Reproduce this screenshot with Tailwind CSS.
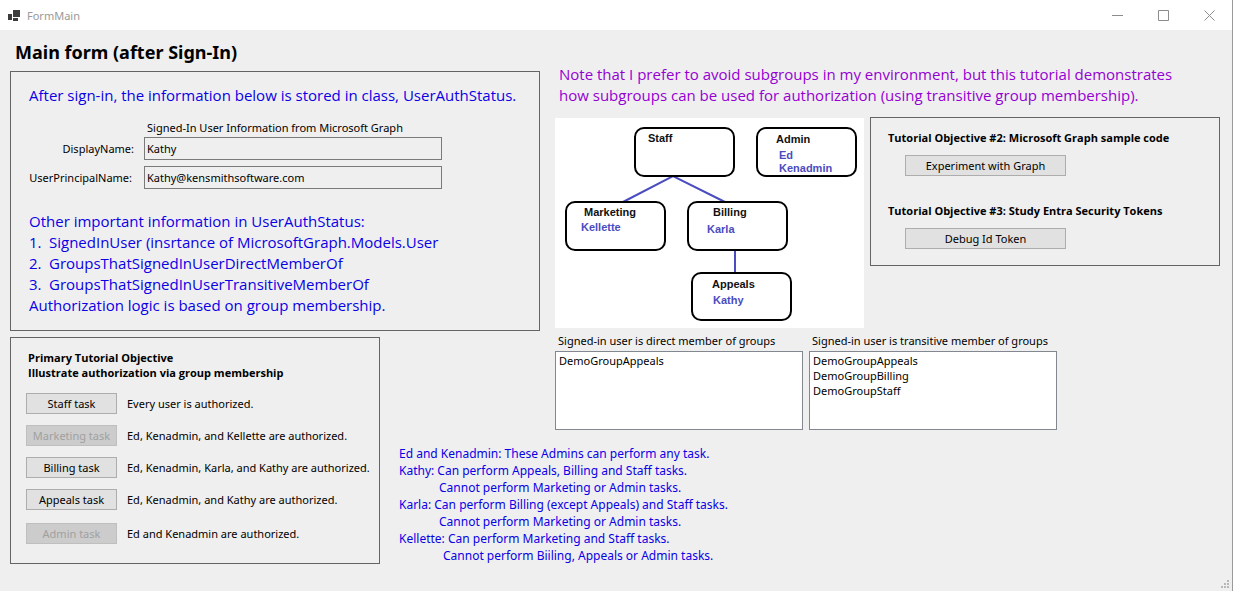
<!DOCTYPE html>
<html lang="en">
<head>
<meta charset="utf-8">
<meta name="viewport" content="width=device-width, initial-scale=1">
<title>FormMain</title>
<script src="https://cdn.jsdelivr.net/npm/@tailwindcss/browser@4"></script>
</head>
<body class="relative flex min-h-screen flex-col border-r border-[#9a9a9a] bg-[#efefef] font-['Noto_Sans','Open_Sans',sans-serif] text-[11px] leading-[15px] text-black">

<header class="flex h-[30px] items-center justify-between bg-white">
  <div class="flex items-center gap-[7px] pl-2 text-[#999999]">
    <svg class="h-[11px] w-3" viewBox="0 0 12 11" aria-hidden="true"><path fill="#3c3c3c" d="M5 0h7v7H5zM0 4h4v6H0zM5 8h5v3H5z"/></svg>
    <span>FormMain</span>
  </div>
  <div class="flex">
    <button type="button" aria-label="Minimize" class="flex h-[30px] w-[46px] items-center justify-center"><svg class="h-[11px] w-[11px]" viewBox="0 0 11 11" fill="none" stroke="#8c8c8c"><path d="M0 5.5h11"/></svg></button>
    <button type="button" aria-label="Maximize" class="flex h-[30px] w-[46px] items-center justify-center"><svg class="h-[11px] w-[11px]" viewBox="0 0 11 11" fill="none" stroke="#8c8c8c"><path d="M.5 .5h10v10H.5z"/></svg></button>
    <button type="button" aria-label="Close" class="flex h-[30px] w-[46px] items-center justify-center"><svg class="h-[11px] w-[11px]" viewBox="0 0 11 11" fill="none" stroke="#8c8c8c"><path d="M.5 .5l10 10M10.500 .5l-10 10"/></svg></button>
  </div>
</header>

<main class="grid grid-cols-[370px_160px_1fr] grid-rows-[41px_auto_99px_auto] pr-3 pl-[10px]">
  <h1 class="col-span-2 pt-[9px] pl-[5px] text-[18px] leading-[26px] font-bold">Main form (after Sign-In)</h1>

  <section class="col-span-2 col-start-1 row-start-2 mb-[6px] border border-[#646464] px-[18px] pt-[13px] pb-[14px]">
    <p class="font-['Open_Sans',sans-serif] text-[15px] leading-[21px] text-[#0a00e6]">After sign-in, the information below is stored in class, UserAuthStatus.</p>
    <div class="mt-[14px] grid grid-cols-[107px_298px] items-center gap-x-2 gap-y-[6px]">
      <p class="col-start-2 -mb-[4px] pl-[3px]">Signed-In User Information from Microsoft Graph</p>
      <label for="display" class="pr-[2px] text-right">DisplayName:</label>
      <input id="display" readonly value="Kathy" class="h-[23px] border border-[#7a7a7a] px-[2px]">
      <label for="upn" class="pr-[4px] text-right">UserPrincipalName:</label>
      <input id="upn" readonly value="Kathy@kensmithsoftware.com" class="h-[23px] border border-[#7a7a7a] px-[2px]">
    </div>
    <div class="mt-[22px] font-['Open_Sans',sans-serif] text-[15px] leading-[21px] text-[#0a00e6]">
      <p>Other important information in UserAuthStatus:</p>
      <ol>
        <li class="flex"><span class="w-5">1.</span>SignedInUser (insrtance of MicrosoftGraph.Models.User</li>
        <li class="flex"><span class="w-5">2.</span>GroupsThatSignedInUserDirectMemberOf</li>
        <li class="flex"><span class="w-5">3.</span>GroupsThatSignedInUserTransitiveMemberOf</li>
      </ol>
      <p>Authorization logic is based on group membership.</p>
    </div>
  </section>

  <section class="col-start-1 row-span-2 row-start-3 border border-[#646464] pt-3 pb-4 pl-[15px]">
    <h2 class="pl-[2px] font-['Open_Sans',sans-serif] font-bold">Primary Tutorial Objective<br>Illustrate authorization via group membership</h2>
    <div class="mt-[13px] grid grid-cols-[91px_1fr] items-center gap-x-[10px] gap-y-[11px] whitespace-nowrap">
      <button type="button" class="h-[21px] border border-[#adadad] bg-[#e1e1e1]">Staff task</button><p>Every user is authorized.</p>
      <button type="button" disabled class="h-[21px] border border-[#bfbfbf] bg-[#cccccc] text-[#a0a0a0]">Marketing task</button><p>Ed, Kenadmin, and Kellette are authorized.</p>
      <button type="button" class="h-[21px] border border-[#adadad] bg-[#e1e1e1]">Billing task</button><p>Ed, Kenadmin, Karla, and Kathy are authorized.</p>
      <button type="button" class="h-[21px] border border-[#adadad] bg-[#e1e1e1]">Appeals task</button><p>Ed, Kenadmin, and Kathy are authorized.</p>
      <button type="button" disabled class="mt-[2px] h-[21px] border border-[#bfbfbf] bg-[#cccccc] text-[#a0a0a0]">Admin task</button><p class="mt-[2px]">Ed and Kenadmin are authorized.</p>
    </div>
  </section>

  <section class="col-start-3 row-span-3 row-start-1 pt-[34px] pl-[15px]">
    <p class="pl-1 font-['Open_Sans',sans-serif] text-[15px] leading-[21px] text-[#9400d3]">Note that I prefer to avoid subgroups in my environment, but this tutorial demonstrates<br>how subgroups can be used for authorization (using transitive group membership).</p>
    <div class="mt-3 flex items-start gap-[6px]">
      <svg class="h-[210px] w-[309px] shrink-0 bg-white font-['Liberation_Sans',Arial,sans-serif] text-[11px] font-bold" viewBox="0 0 309 210" role="img" aria-label="Group hierarchy">
        <g fill="none" stroke="#4a4cc0" stroke-width="2"><path d="M67 84.500L118 58l53 26.500M180 132v23"/></g>
        <g fill="#fff" stroke="#000" stroke-width="2">
          <rect x="80" y="10" width="99" height="48" rx="9"/>
          <rect x="202" y="10" width="99" height="48" rx="9"/>
          <rect x="11" y="84" width="99" height="48" rx="9"/>
          <rect x="133" y="84" width="99" height="48" rx="9"/>
          <rect x="137" y="155" width="99" height="47" rx="9"/>
        </g>
        <g fill="#111">
          <text x="93" y="24">Staff</text><text x="221" y="25">Admin</text>
          <text x="29" y="98">Marketing</text><text x="158" y="98">Billing</text><text x="157" y="170">Appeals</text>
        </g>
        <g fill="#4a4cc0">
          <text x="224" y="41">Ed</text><text x="224" y="54">Kenadmin</text>
          <text x="26" y="113">Kellette</text><text x="152" y="115">Karla</text><text x="158" y="186">Kathy</text>
        </g>
      </svg>
      <div class="-mt-px flex-1 border border-[#646464] pt-3 pb-4 pl-[17px]">
        <h2 class="font-['Open_Sans',sans-serif] font-bold">Tutorial Objective #2: Microsoft Graph sample code</h2>
        <button type="button" class="mt-[10px] ml-[17px] block h-[21px] w-[161px] border border-[#adadad] bg-[#e1e1e1]">Experiment with Graph</button>
        <h2 class="mt-[27px] font-['Open_Sans',sans-serif] font-bold">Tutorial Objective #3: Study Entra Security Tokens</h2>
        <button type="button" class="mt-[10px] ml-[17px] block h-[21px] w-[161px] border border-[#adadad] bg-[#e1e1e1]">Debug Id Token</button>
      </div>
    </div>
    <div class="mt-[5px] flex gap-[6px]">
      <div class="w-[248px]">
        <label for="direct" class="block pl-[3px]">Signed-in user is direct member of groups</label>
        <select id="direct" multiple class="mt-[3px] block h-[79px] w-full overflow-hidden border border-[#828790] bg-white pt-px">
          <option class="min-h-0 p-0 pl-[3px]">DemoGroupAppeals</option>
        </select>
      </div>
      <div class="w-[248px]">
        <label for="transitive" class="block pl-[3px]">Signed-in user is transitive member of groups</label>
        <select id="transitive" multiple class="mt-[3px] block h-[79px] w-full overflow-hidden border border-[#828790] bg-white pt-px">
          <option class="min-h-0 p-0 pl-[3px]">DemoGroupAppeals</option>
          <option class="min-h-0 p-0 pl-[3px]">DemoGroupBilling</option>
          <option class="min-h-0 p-0 pl-[3px]">DemoGroupStaff</option>
        </select>
      </div>
    </div>
  </section>

  <section class="col-span-2 col-start-2 row-start-4 pt-[9px] pl-[19px] text-[12px] leading-[17px] text-[#0a00e6]">
    <p>Ed and Kenadmin: These Admins can perform any task.</p>
    <p>Kathy: Can perform Appeals, Billing and Staff tasks.</p>
    <p class="pl-10">Cannot perform Marketing or Admin tasks.</p>
    <p>Karla: Can perform Billing (except Appeals) and Staff tasks.</p>
    <p class="pl-10">Cannot perform Marketing or Admin tasks.</p>
    <p>Kellette: Can perform Marketing and Staff tasks.</p>
    <p class="pl-11">Cannot perform Biiling, Appeals or Admin tasks.</p>
  </section>
</main>

<svg class="absolute right-[2px] bottom-[2px] h-[9px] w-[9px]" viewBox="0 0 9 9" fill="#b8b8b8" aria-hidden="true"><path d="M6 0h2v2H6zM3 3h2v2H3zM6 3h2v2H6zM0 6h2v2H0zM3 6h2v2H3zM6 6h2v2H6z"/></svg>
</body>
</html>
